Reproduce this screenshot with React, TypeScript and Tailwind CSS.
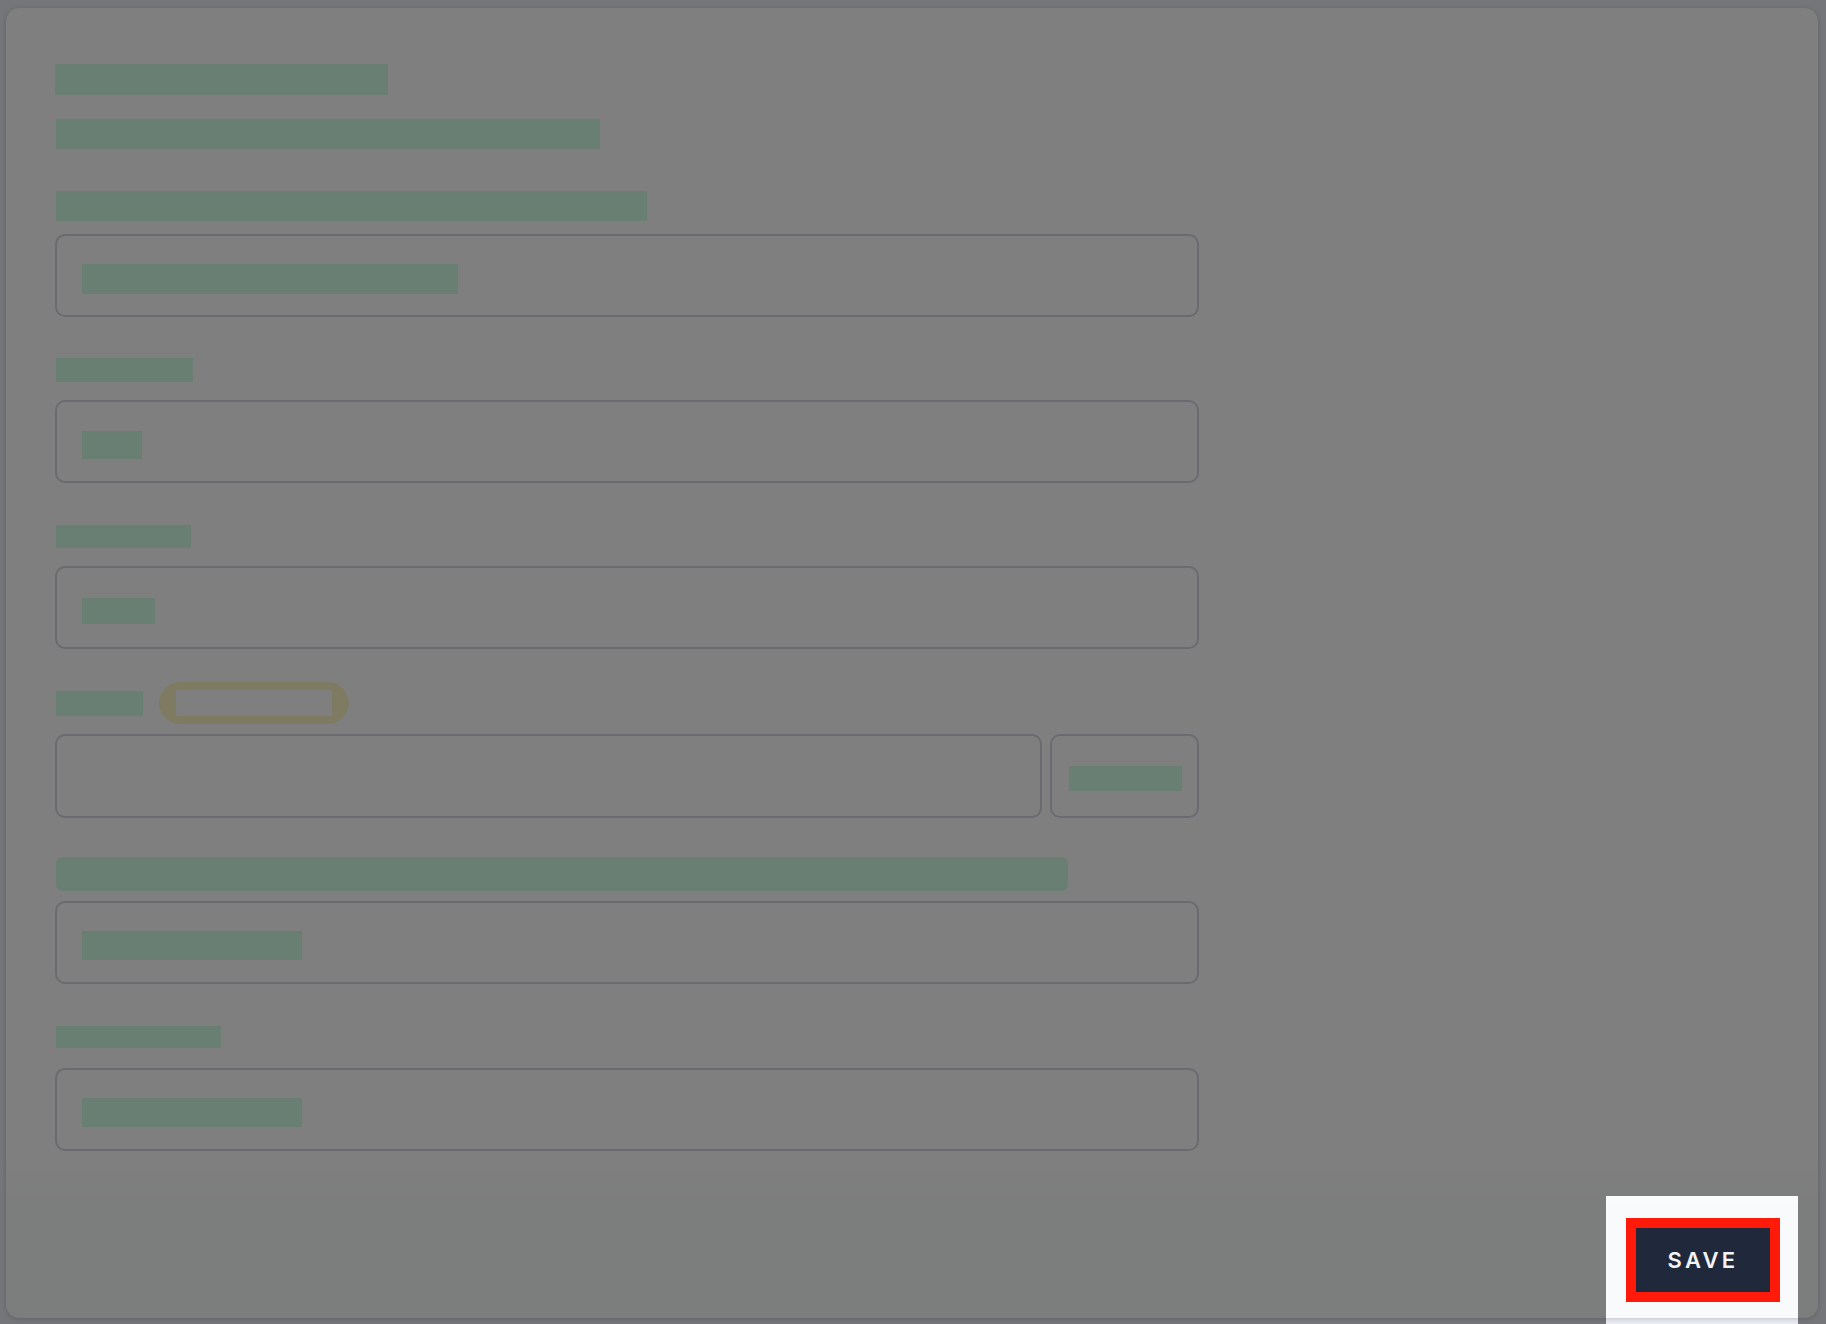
import type { ReactNode } from "react";

// Redaction bar used in place of form text
function Bar({ className = "" }: { className?: string }) {
  return <div className={`shrink-0 bg-[#d4fee6] ${className}`} />;
}

// Outlined input-like box
function Field({ className = "", children }: { className?: string; children?: ReactNode }) {
  return (
    <div
      className={`flex h-[83px] items-center rounded-[10px] border-2 border-[#d6d4e0] pl-[25px] pt-[6px] ${className}`}
    >
      {children}
    </div>
  );
}

export default function App() {
  return (
    <div className="relative h-[1324px] w-full overflow-hidden bg-[#eaecf4] pb-1.5 pl-1.5 pr-2 pt-2 font-['Inter',sans-serif]">
      <div className="flex h-full flex-col rounded-[14px] bg-white shadow-[0_1px_5px_rgba(0,0,0,0.18)]">
        {/* FORM */}
        <div className="flex w-[1193px] flex-col pl-[49px] pt-[56px]">
          <Bar className="h-[31px] w-[333px]" />
          <Bar className="ml-px mt-[24px] h-[30px] w-[544px]" />

          <Bar className="ml-px mt-[42px] h-[30px] w-[591px]" />
          <Field className="mt-[13px]">
            <Bar className="h-[30px] w-[376px]" />
          </Field>

          <Bar className="ml-px mt-[41px] h-[24px] w-[137px]" />
          <Field className="mt-[18px] h-[82px]">
            <Bar className="h-[28px] w-[60px]" />
          </Field>

          <Bar className="ml-px mt-[42px] h-[23px] w-[135px]" />
          <Field className="mt-[18px] h-[82px]">
            <Bar className="h-[26px] w-[73px]" />
          </Field>

          <div className="mt-[33px] flex items-center gap-[16px]">
            <Bar className="ml-px h-[25px] w-[87px]" />
            <div className="rounded-full bg-[#fff6c4] px-[17px] py-[8px]">
              <div className="h-[26px] w-[156px] rounded-[2px] bg-white" />
            </div>
          </div>
          <div className="mt-[10px] flex gap-[8px]">
            <Field className="h-[84px] flex-1" />
            <div className="flex h-[84px] w-[149px] items-center rounded-[10px] border-2 border-[#d6d4e0] pl-[17px] pt-[4px]">
              <Bar className="h-[25px] w-[113px]" />
            </div>
          </div>

          <Bar className="ml-px mt-[39px] h-[34px] w-[1012px] rounded-md" />
          <Field className="mt-[10px]">
            <Bar className="h-[29px] w-[220px]" />
          </Field>

          <Bar className="ml-px mt-[42px] h-[22px] w-[165px]" />
          <Field className="mt-[20px] h-[82px]">
            <Bar className="h-[29px] w-[220px]" />
          </Field>
        </div>

        {/* FOOTER */}
        <div className="flex flex-1 items-end justify-end rounded-b-[14px] bg-[linear-gradient(to_bottom,#ffffff,#f9fafb_60px)] pb-[26px] pr-[48px]">
          <button className="h-[64px] w-[134px] bg-[#1f293b] text-[22px] font-semibold tracking-[0.15em] text-[#f3f4f6] outline-[10px] outline-solid outline-[#ff1a0a]">
            SAVE
          </button>
        </div>
      </div>

      {/* tour spotlight */}
      <div className="pointer-events-none absolute left-[1606px] top-[1196px] h-[140px] w-[192px] shadow-[0_0_0_9999px_rgba(0,0,0,0.5)]" />
    </div>
  );
}
